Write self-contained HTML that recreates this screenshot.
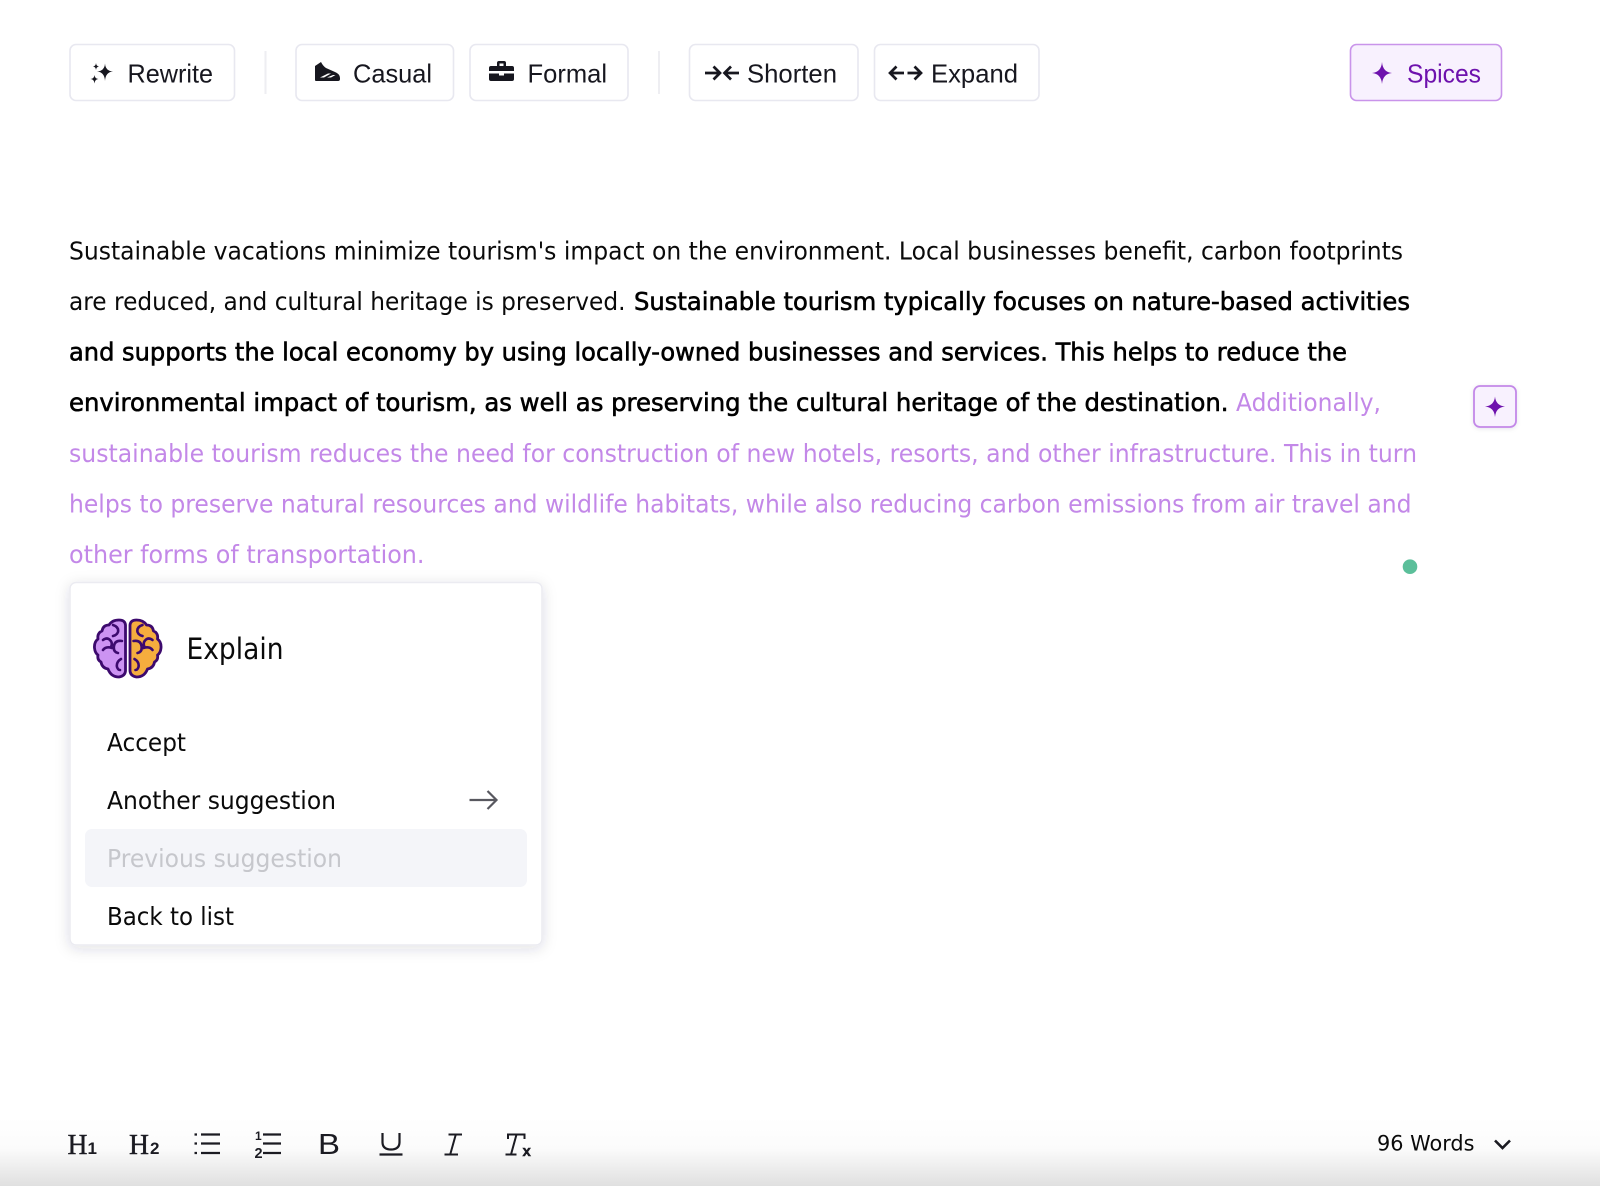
<!DOCTYPE html>
<html lang="en"><head><meta charset="utf-8"><title>Explain</title>
<style>
html,body{margin:0;padding:0;background:#fff}
svg{display:block}
.t{font-family:"DejaVu Sans",sans-serif;font-size:25px;fill:#0a0a0a}
.b{fill:#000;stroke:#000;stroke-width:.6px}
.p{fill:#c388e8}
.g{font-family:"Liberation Sans",sans-serif;font-size:26px;fill:#17171f}
.btn{fill:#fff;stroke:#e8e8f0;stroke-width:1.6}
</style></head><body>
<svg width="1600" height="1186" viewBox="0 0 1600 1186" xmlns="http://www.w3.org/2000/svg">
<defs>
<linearGradient id="bg" x1="0" y1="0" x2="0" y2="1"><stop offset="0" stop-color="#fff"/><stop offset=".45" stop-color="#fbfbfb"/><stop offset="1" stop-color="#e0e0e0"/></linearGradient>
<filter id="sh" x="-15%" y="-15%" width="130%" height="130%"><feDropShadow dx="0" dy="3" stdDeviation="7" flood-color="#20204a" flood-opacity=".14"/></filter>
<filter id="sh2" x="-30%" y="-30%" width="160%" height="160%"><feDropShadow dx="0" dy="1" stdDeviation="2" flood-color="#20204a" flood-opacity=".1"/></filter>
<g id="half"><path d="M125.500 625Q125 620 119 620Q112 620 109 625Q103 625 102 631Q97 633 98 639Q94 642 94.500 648Q95 653 98 655Q97 660 101 662Q102 668 108 669Q111 677 119 677Q125 676 125.500 671Z" stroke="#3d0a6e" stroke-width="2.800" stroke-linejoin="round"/><path d="M113 625Q119 627 118 632Q117 635 113 636M103 640Q107 637 110 640Q113 643 111 647M122 641Q115 640 114 646Q113 652 118 653M112 648Q106 646 103 650M121 659Q116 662 117 667Q118 670 120 670" fill="none" stroke="#3d0a6e" stroke-width="2.600" stroke-linecap="round"/></g>
</defs>
<rect width="1600" height="1186" fill="#fff"/>
<rect x="0" y="1118" width="1600" height="68" fill="url(#bg)"/>

<!-- top toolbar -->
<rect class="btn" x="70" y="44.500" width="164.500" height="56" rx="6"/>
<rect x="264.500" y="51" width="2" height="43" fill="#eeeef2"/>
<rect class="btn" x="296" y="44.500" width="157.500" height="56" rx="6"/>
<rect class="btn" x="470" y="44.500" width="158" height="56" rx="6"/>
<rect x="658" y="51" width="2" height="43" fill="#eeeef2"/>
<rect class="btn" x="689.500" y="44.500" width="168.500" height="56" rx="6"/>
<rect class="btn" x="874.500" y="44.500" width="164.500" height="56" rx="6"/>
<rect x="1350.500" y="44.500" width="151" height="56" rx="6" fill="#f8f1fe" stroke="#c994ea" stroke-width="1.600"/>
<text class="g" x="127.500" y="82.500" textLength="85.500" lengthAdjust="spacingAndGlyphs">Rewrite</text>
<text class="g" x="353" y="82.500" textLength="79" lengthAdjust="spacingAndGlyphs">Casual</text>
<text class="g" x="527.500" y="82.500" textLength="79.500" lengthAdjust="spacingAndGlyphs">Formal</text>
<text class="g" x="747" y="82.500" textLength="90" lengthAdjust="spacingAndGlyphs">Shorten</text>
<text class="g" x="931" y="82.500" textLength="87" lengthAdjust="spacingAndGlyphs">Expand</text>
<text class="g" x="1407" y="82.500" textLength="74" lengthAdjust="spacingAndGlyphs" style="fill:#6e12ad">Spices</text>
<!-- sparkle -->
<path d="M105 63.500Q105.500 71 113 71.500Q105.500 72 105 81Q104.500 72 97 71.500Q104.500 71 105 63.500ZM96 63Q96.300 66.200 99 66.500Q96.300 66.800 96 70Q95.700 66.800 93 66.500Q95.700 66.200 96 63ZM94.500 75Q94.800 78.700 98.500 79Q94.800 79.300 94.500 83.500Q94.200 79.300 90.500 79Q94.200 78.700 94.500 75Z" fill="#17171f"/>
<!-- shoe -->
<path d="M315 80V66L321 62Q323 66 326 68L335 72Q340 74 340 78V79Q340 81 338 81H316Q315 81 315 80Z" fill="#17171f"/>
<path d="M320 77.500H324L331 73.500H328ZM327 77.500H331L335.500 75H333Z" fill="#fff"/>
<!-- case -->
<path d="M497 66V63Q497 61 499 61H504Q506 61 506 63V66H512Q514 66 514 68V71H489V68Q489 66 491 66ZM499.500 66H503.500V63.500H499.500ZM489 73.500H499V75.500H504V73.500H514V79Q514 81 512 81H491Q489 81 489 79Z" fill="#17171f" fill-rule="evenodd"/>
<!-- shorten arrows -->
<path d="M705 73H720M713.500 66.500L720 73L713.500 79.500M739 73H724.500M731 66.500L724.500 73L731 79.500" fill="none" stroke="#17171f" stroke-width="2.700"/>
<!-- expand arrows -->
<path d="M890 73H904M896.500 66.500L890 73L896.500 79.500M907.500 73H921M914.500 66.500L921 73L914.500 79.500" fill="none" stroke="#17171f" stroke-width="2.700"/>
<!-- spices star -->
<path d="M1382 62Q1382.800 72.200 1392 73Q1382.800 73.800 1382 84Q1381.200 73.800 1372 73Q1381.200 72.200 1382 62Z" fill="#6e12ad"/>

<!-- body text -->
<text class="t" x="69" y="259.300" textLength="1334" lengthAdjust="spacingAndGlyphs">Sustainable vacations minimize tourism's impact on the environment. Local businesses benefit, carbon footprints</text>
<text class="t" x="69" y="309.800" textLength="556.500" lengthAdjust="spacingAndGlyphs">are reduced, and cultural heritage is preserved.</text>
<text class="t b" x="634" y="309.800" textLength="776" lengthAdjust="spacingAndGlyphs">Sustainable tourism typically focuses on nature-based activities</text>
<text class="t b" x="69" y="360.500" textLength="1278" lengthAdjust="spacingAndGlyphs">and supports the local economy by using locally-owned businesses and services. This helps to reduce the</text>
<text class="t b" x="69" y="411" textLength="1159.500" lengthAdjust="spacingAndGlyphs">environmental impact of tourism, as well as preserving the cultural heritage of the destination.</text>
<text class="t p" x="1236" y="411" textLength="145" lengthAdjust="spacingAndGlyphs">Additionally,</text>
<text class="t p" x="69" y="461.800" textLength="1348" lengthAdjust="spacingAndGlyphs">sustainable tourism reduces the need for construction of new hotels, resorts, and other infrastructure. This in turn</text>
<text class="t p" x="69" y="512.300" textLength="1342.500" lengthAdjust="spacingAndGlyphs">helps to preserve natural resources and wildlife habitats, while also reducing carbon emissions from air travel and</text>
<text class="t p" x="69" y="563.200" textLength="355.500" lengthAdjust="spacingAndGlyphs">other forms of transportation.</text>

<!-- side button and dot -->
<rect x="1474" y="386" width="42" height="41" rx="6" fill="#f8f1fe" stroke="#c388e8" stroke-width="1.800" filter="url(#sh2)"/>
<path d="M1495 396.500Q1495.800 405.700 1505 406.500Q1495.800 407.300 1495 417Q1494.200 407.300 1485 406.500Q1494.200 405.700 1495 396.500Z" fill="#6e12ad"/>
<circle cx="1410" cy="566.700" r="7.300" fill="#5bbf9a"/>

<!-- popup -->
<rect x="70" y="582.500" width="472" height="362.500" rx="6" fill="#fff" stroke="#ebebf1" stroke-width="1.500" filter="url(#sh)"/>
<rect x="85" y="829" width="442" height="58" rx="7" fill="#f4f5f9"/>
<use href="#half" fill="#cc93f2"/>
<use href="#half" transform="translate(255.500,0) scale(-1,1)" fill="#f5ad3e"/>
<text class="t" x="186.500" y="659" style="font-size:29.500px" textLength="97" lengthAdjust="spacingAndGlyphs">Explain</text>
<text class="t" x="107" y="751" textLength="79" lengthAdjust="spacingAndGlyphs">Accept</text>
<text class="t" x="107" y="809" textLength="229" lengthAdjust="spacingAndGlyphs">Another suggestion</text>
<text class="t" x="107" y="867" textLength="235" lengthAdjust="spacingAndGlyphs" style="fill:#c6c7cc">Previous suggestion</text>
<text class="t" x="107" y="925" textLength="127" lengthAdjust="spacingAndGlyphs">Back to list</text>
<path d="M469.500 800H496.500M487.500 791L496.500 800L487.500 809" fill="none" stroke="#58585f" stroke-width="2.200"/>

<!-- bottom toolbar -->
<g fill="#1b1b22" font-family="Liberation Serif,serif">
<text x="67.500" y="1154" font-size="28" textLength="20" lengthAdjust="spacingAndGlyphs" stroke="#1b1b22" stroke-width=".4">H</text>
<text x="87.500" y="1154" font-size="17" font-weight="bold" font-family="Liberation Sans,sans-serif">1</text>
<text x="129" y="1154" font-size="28" textLength="20" lengthAdjust="spacingAndGlyphs" stroke="#1b1b22" stroke-width=".4">H</text>
<text x="150" y="1154" font-size="17" font-weight="bold" font-family="Liberation Sans,sans-serif">2</text>
<text x="255" y="1140" font-size="12" font-weight="bold" font-family="Liberation Sans,sans-serif" textLength="7">1</text>
<text x="254.500" y="1158" font-size="14.500" font-weight="bold" font-family="Liberation Sans,sans-serif" textLength="8.500">2</text>
<text x="318" y="1154" font-size="28.500" font-family="Liberation Sans,sans-serif" textLength="22" lengthAdjust="spacingAndGlyphs">B</text>
<text x="522.500" y="1156" font-size="15" font-weight="bold" font-family="Liberation Sans,sans-serif" stroke="#1b1b22" stroke-width=".5">x</text>
</g>
<path d="M201 1134.500H220M201 1143.500H220M201 1153H220M263 1134.500H281M263 1143.500H281M263 1153H281" stroke="#1b1b22" stroke-width="2.300" fill="none"/>
<path d="M194.500 1134.500H197M194.500 1143.500H197M194.500 1153H197" stroke="#1b1b22" stroke-width="2.300" fill="none"/>
<path d="M382.500 1133V1142Q382.500 1149.500 391 1149.500Q399.500 1149.500 399.500 1142V1133M379.500 1154.500H402.500" stroke="#1b1b22" stroke-width="2.200" fill="none"/>
<!-- italic icon -->
<path d="M448.500 1134.500H462M455.800 1134.500L450.200 1154.500M444.500 1154.500H458" stroke="#1b1b22" stroke-width="2" fill="none"/>
<!-- clear-format icon -->
<path d="M508 1139V1134.500H524.500V1139M516.500 1134.500L511 1154.500M505.500 1154.500H516.500" stroke="#1b1b22" stroke-width="2" fill="none"/>
<text class="t" x="1377" y="1150.300" style="font-size:21.500px" textLength="97.500" lengthAdjust="spacingAndGlyphs">96 Words</text>
<path d="M1495 1140.500L1502.500 1148L1510 1140.500" stroke="#1b1b22" stroke-width="2.600" fill="none"/>
</svg>
</body></html>
